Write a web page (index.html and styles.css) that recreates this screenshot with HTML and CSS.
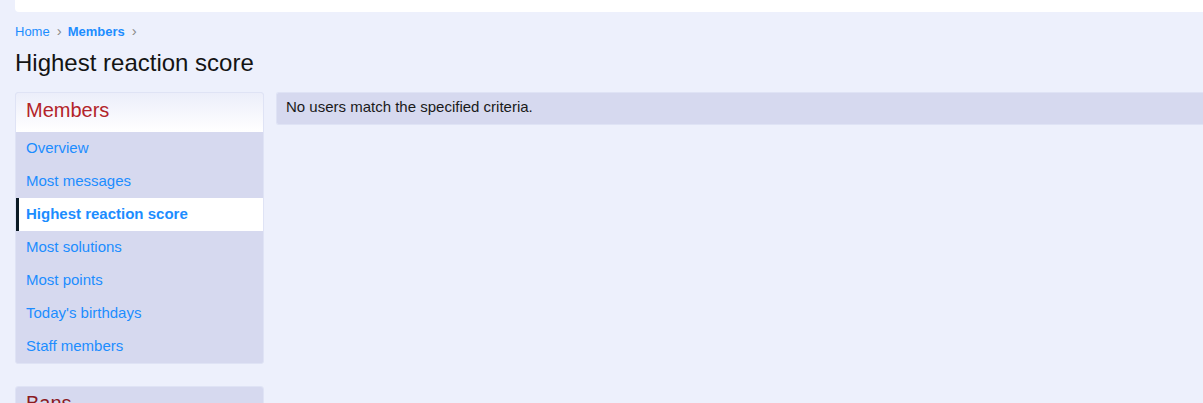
FILE: index.html
```html
<!DOCTYPE html>
<html>
<head>
<meta charset="utf-8">
<link rel="stylesheet" href="styles.css">
</head>
<body>
<div class="topbar"></div>
<div class="page">
  <nav class="crumbs">
    <a class="crumb" href="#">Home</a>
    <span class="chev">&#8250;</span>
    <a class="crumb strong" href="#">Members</a>
    <span class="chev">&#8250;</span>
  </nav>
  <h1 class="title">Highest reaction score</h1>
  <div class="cols">
    <aside class="side">
      <div class="block">
        <h3 class="block-head">Members</h3>
        <a class="item" href="#">Overview</a>
        <a class="item" href="#">Most messages</a>
        <a class="item active" href="#">Highest reaction score</a>
        <a class="item" href="#">Most solutions</a>
        <a class="item" href="#">Most points</a>
        <a class="item" href="#">Today's birthdays</a>
        <a class="item" href="#">Staff members</a>
      </div>
      <div class="block bans">
        <h3 class="block-head plain">Bans</h3>
      </div>
    </aside>
    <main class="main">
      <div class="notice">No users match the specified criteria.</div>
    </main>
  </div>
</div>
</body>
</html>
```
FILE: styles.css
```css
html, body {
  margin: 0;
  padding: 0;
  background: #edf0fc;
  font-family: "Liberation Sans", Arial, sans-serif;
  color: #141414;
  overflow: hidden;
}
.topbar {
  margin-left: 15px;
  height: 12px;
  background: #ffffff;
  border-bottom-left-radius: 4px;
}
.page {
  padding-left: 15px;
}
.crumbs {
  display: flex;
  align-items: center;
  height: 20px;
  margin-top: 9px;
  font-size: 13px;
}
.crumb {
  color: #1c8dff;
  text-decoration: none;
}
.crumb.strong {
  font-weight: bold;
}
.chev {
  color: #8a8a8a;
  font-size: 15px;
  margin: 0 6px 0 7px;
  position: relative;
  top: -1px;
}
.title {
  margin: 8px 0 0;
  font-size: 24px;
  font-weight: normal;
  line-height: 28px;
  color: #141414;
}
.cols {
  display: flex;
  gap: 12px;
  margin-top: 15px;
  align-items: flex-start;
}
.side {
  width: 249px;
  flex: none;
}
.block {
  border: 1px solid #dfe3f5;
  border-radius: 3px;
  background: #d6d9ef;
  overflow: hidden;
}
.block-head {
  margin: 0;
  height: 39px;
  padding: 0 10px 5px;
  box-sizing: border-box;
  display: flex;
  align-items: center;
  font-size: 20px;
  font-weight: normal;
  color: #b3242a;
  background: linear-gradient(to bottom, #eceefa, #ffffff);
}
.block-head.plain {
  background: #d6d9ef;
  color: #8b1a1f;
  align-items: flex-start;
  padding-top: 5px;
  height: 40px;
}
.item {
  display: flex;
  align-items: center;
  height: 33px;
  padding: 0 10px 2px;
  box-sizing: border-box;
  font-size: 15px;
  color: #1c8dff;
  text-decoration: none;
}
.item.active {
  background: #ffffff;
  font-weight: bold;
  border-left: 3px solid #0b1a24;
  padding-left: 7px;
}
.bans {
  margin-top: 22px;
  height: 40px;
}
.main {
  flex: 1;
  min-width: 0;
}
.notice {
  display: flex;
  align-items: center;
  padding: 0 10px 5px 9px;
  box-sizing: border-box;
  height: 33px;
  border: 1px solid #dfe3f5;
  border-right: none;
  border-radius: 3px 0 0 3px;
  background: #d6d9ef;
  font-size: 15px;
  color: #1a1a1a;
}
```
